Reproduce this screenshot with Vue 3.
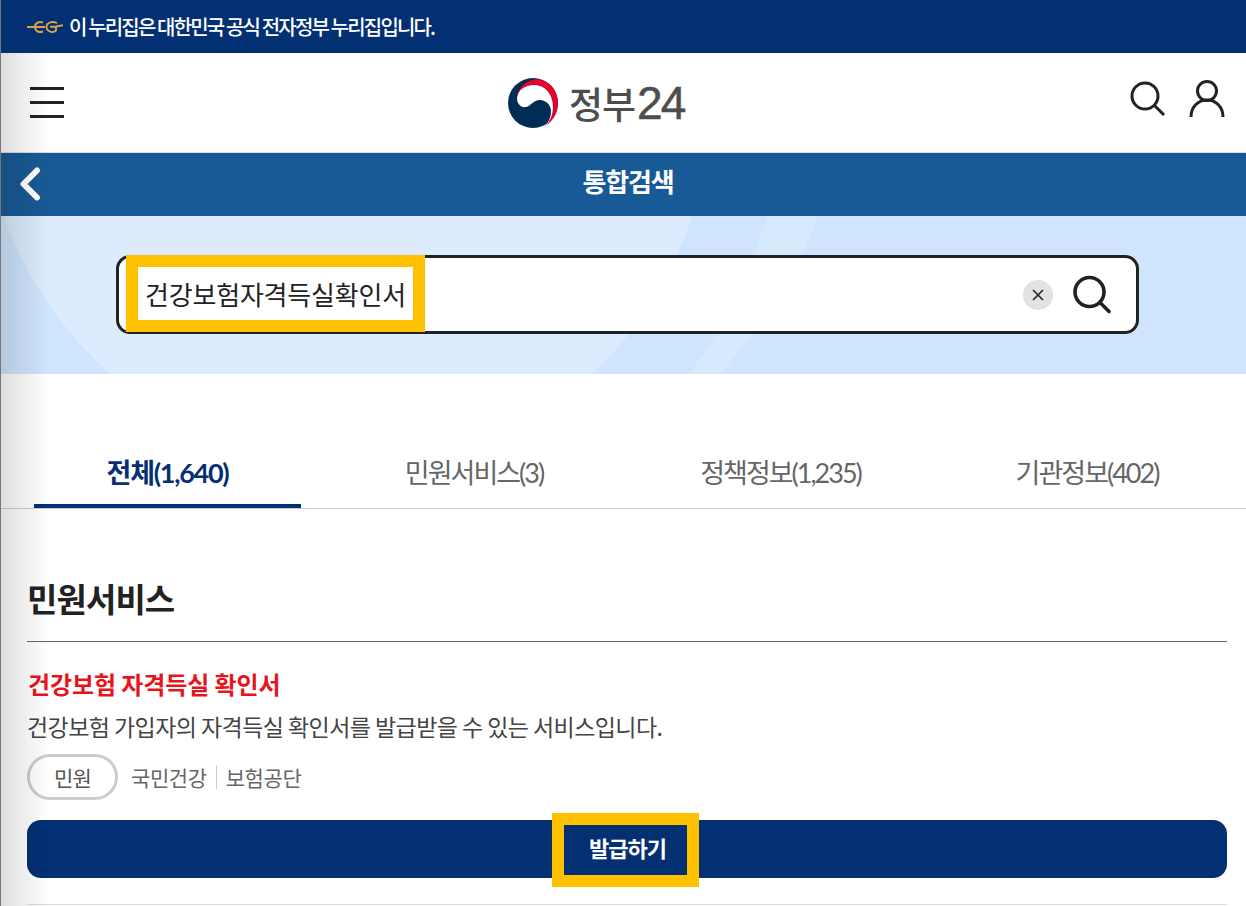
<script setup>
const tabs = [
  { label: '전체(1,640)', active: true },
  { label: '민원서비스(3)', active: false },
  { label: '정책정보(1,235)', active: false },
  { label: '기관정보(402)', active: false }
]
</script>

<template>
  <div class="page">
    <div class="gov-bar">
      <svg class="gov-mark" width="36" height="12" viewBox="0 0 36 12" fill="none" stroke="#d9a24a" stroke-width="1.900">
        <path d="M0 6h18M16 1.500C12 0 8 2 8 6s4 6 8 4.500" />
        <path d="M30 2.200C26-.5 19.500 1.500 19.500 6s6.500 6.500 9.500 3.500V5.800h-6M29 5.500l7-1.300" />
      </svg>
      <span>이 누리집은 대한민국 공식 전자정부 누리집입니다.</span>
    </div>

    <header class="site-header">
      <div class="burger"><i></i><i></i><i></i></div>
      <div class="logo">
        <svg width="52" height="52" viewBox="0 0 52 52">
          <circle cx="26" cy="26" r="25" fill="#002d56" />
          <path d="M10 21C10 12 18 3 30 2c12 1 21 11 21 24 0 11-7 21-15 24 6-3 10-11 10-20C46 17 38 8 27 8 18 8 11 13 10 21z" fill="#e6002d" />
          <path d="M10 21c0 6 4 10 9 9 5-1 7-7 14-7 6 0 11 5 11 11 0 7-3 13-8 16 6-3 10-11 10-20C46 17 38 8 27 8 18 8 11 13 10 21z" fill="#fff" />
        </svg>
        <span class="logo-text">정부<b>24</b></span>
      </div>
      <div class="header-icons">
        <svg width="38" height="38" viewBox="0 0 38 38" fill="none" stroke="#222" stroke-width="3">
          <circle cx="16" cy="16" r="13" />
          <path d="M25.500 25.500l9.500 9.500" />
        </svg>
        <svg width="36" height="38" viewBox="0 0 36 38" fill="none" stroke="#222" stroke-width="3">
          <circle cx="18" cy="11" r="9.500" />
          <path d="M2 37c0-10 7-17 16-17s16 7 16 17" />
        </svg>
      </div>
    </header>

    <div class="title-bar">
      <svg class="back" width="22" height="34" viewBox="0 0 22 34" fill="none" stroke="#fff" stroke-width="6" stroke-linecap="round" stroke-linejoin="round">
        <path d="M18 3.500L4.500 17 18 30.500" />
      </svg>
      <h1>통합검색</h1>
    </div>

    <section class="hero">
      <svg class="hero-art" width="1246" height="158" viewBox="0 0 1246 158" aria-hidden="true">
        <path d="M4 0C25 60 62 115 110 158H593C640 110 670 65 692 0z" fill="#dcebfd" />
        <path d="M767 0C755 40 730 110 688 158H720C770 100 800 50 818 0z" fill="#d7e9fd" />
      </svg>
      <div class="search">
        <div class="query-wrap"><span class="query">건강보험자격득실확인서</span></div>
        <div class="search-actions">
          <span class="clear">
            <svg width="14" height="14" viewBox="0 0 14 14" fill="none" stroke="#222" stroke-width="1.600">
              <path d="M2 2l10 10M12 2L2 12" />
            </svg>
          </span>
          <svg width="40" height="40" viewBox="0 0 40 40" fill="none" stroke="#222" stroke-width="3.600">
            <circle cx="17.500" cy="17" r="14.500" />
            <path d="M28 27.500l9 9" stroke-linecap="round" />
          </svg>
        </div>
      </div>
    </section>

    <nav class="tabs">
      <div v-for="tab in tabs" :key="tab.label" class="tab" :class="{ active: tab.active }">{{ tab.label }}</div>
    </nav>

    <main class="content">
      <h2>민원서비스</h2>
      <article class="result">
        <h3>건강보험 자격득실 확인서</h3>
        <p>건강보험 가입자의 자격득실 확인서를 발급받을 수 있는 서비스입니다.</p>
        <div class="meta">
          <span class="pill">민원</span>
          <span class="org">국민건강</span>
          <span class="org second">보험공단</span>
        </div>
        <div class="issue"><span>발급하기</span></div>
      </article>
    </main>

    <div class="edge-shadow"></div>
  </div>
</template>

<style>
html, body { margin: 0; background: #fff; }
</style>

<style scoped>
.page {
  position: relative;
  width: 1246px;
  height: 906px;
  overflow: hidden;
  background: #fff;
  font-family: "Noto Sans CJK KR", "Noto Sans", sans-serif;
  color: #222;
}
.gov-bar {
  height: 53px;
  box-sizing: border-box;
  padding: 0 0 0 27px;
  display: flex;
  align-items: center;
  gap: 6px;
  background: #032f73;
  color: #fff;
  font-size: 20px;
  font-weight: 500;
  letter-spacing: -1.840px;
}
.site-header {
  height: 100px;
  box-sizing: border-box;
  border-bottom: 1px solid #ddd;
  padding: 0 21px 0 30px;
  display: flex;
  align-items: center;
  justify-content: space-between;
  position: relative;
}
.burger { width: 34px; display: flex; flex-direction: column; gap: 11px; }
.burger i { display: block; height: 3px; background: #222; }
.logo {
  position: absolute;
  left: 507px;
  top: 24px;
  display: flex;
  align-items: center;
  gap: 10px;
}
.logo-text {
  font-size: 37px;
  font-weight: 500;
  color: #4d4d4d;
  letter-spacing: -1px;
  line-height: 52px;
  white-space: nowrap;
}
.logo-text b {
  font-family: "Liberation Sans", sans-serif;
  font-size: 46px;
  font-weight: 400;
  letter-spacing: -2px;
  margin-left: 2px;
  -webkit-text-stroke: 0.5px #4d4d4d;
}
.header-icons { display: flex; gap: 22px; align-items: center; margin-top: -8px; }
.title-bar {
  height: 63px;
  background: #185a96;
  display: flex;
  align-items: center;
  justify-content: center;
  position: relative;
  padding-left: 10px;
}
.title-bar h1 {
  margin: 0 0 8px;
  color: #fff;
  font-size: 26px;
  font-weight: 700;
  letter-spacing: -1.200px;
}
.back { position: absolute; left: 19px; top: 14px; }
.hero {
  height: 158px;
  background: #cfe5fd;
  position: relative;
  display: flex;
  align-items: center;
  justify-content: center;
  padding: 0 0 1px 9px;
  box-sizing: border-box;
}
.hero-art { position: absolute; left: 0; top: 0; }
.search {
  position: relative;
  width: 1023px;
  height: 79px;
  box-sizing: border-box;
  background: #fff;
  border: 3px solid #222;
  border-radius: 14px;
  display: flex;
  align-items: center;
  justify-content: space-between;
}
.query-wrap {
  position: absolute;
  left: 7px;
  top: -3px;
  width: 299px;
  height: 77px;
  box-sizing: border-box;
  border: 12px solid #ffc000;
  background: #fff;
  display: flex;
  align-items: center;
  padding-left: 7px;
}
.query { font-size: 26px; color: #222; letter-spacing: -0.200px; white-space: nowrap; }
.search-actions {
  margin-left: auto;
  display: flex;
  align-items: center;
  gap: 19px;
  padding-right: 24px;
}
.clear {
  width: 30px;
  height: 30px;
  border-radius: 50%;
  background: #e2e2e2;
  display: flex;
  align-items: center;
  justify-content: center;
}
.tabs {
  height: 135px;
  box-sizing: border-box;
  border-bottom: 1px solid #ccc;
  display: grid;
  grid-template-columns: repeat(4, 267px);
  column-gap: 39.500px;
  padding: 0 0 0 34px;
  align-items: end;
}
.tab {
  height: 71px;
  box-sizing: border-box;
  text-align: center;
  font-family: Lato, "Noto Sans CJK KR", sans-serif;
  font-size: 27px;
  line-height: 72px;
  letter-spacing: -2px;
  color: #666;
  white-space: nowrap;
}
.tab.active {
  color: #032f73;
  font-weight: 700;
  letter-spacing: -1.300px;
  border-bottom: 4px solid #032f73;
}
.content { padding: 0 19px 0 27px; }
h2 {
  margin: 0;
  height: 133px;
  box-sizing: border-box;
  padding-top: 65px;
  border-bottom: 1px solid #666;
  font-size: 33px;
  font-weight: 700;
  line-height: 48px;
  letter-spacing: -0.900px;
  color: #222;
}
.result { border-bottom: 1px solid #ddd; height: 263px; box-sizing: border-box; }
h3 {
  margin: 0;
  padding: 25px 0 0 1px;
  font-size: 24px;
  font-weight: 700;
  line-height: 34px;
  letter-spacing: -0.100px;
  color: #e8141c;
}
p {
  margin: 9px 0 0;
  font-size: 23px;
  line-height: 32px;
  letter-spacing: -0.560px;
  color: #444;
}
.meta { display: flex; align-items: center; margin-top: 12px; height: 46px; }
.pill {
  width: 91px;
  height: 46px;
  box-sizing: border-box;
  border: 3px solid #ccc;
  border-radius: 23px;
  display: flex;
  align-items: center;
  justify-content: center;
  font-size: 21px;
  color: #555;
  letter-spacing: -0.800px;
}
.org { font-size: 21px; color: #666; letter-spacing: -0.400px; margin-left: 13px; }
.org.second { margin-left: 9px; padding-left: 9px; border-left: 1px solid #ccc; line-height: 24px; }
.issue {
  position: relative;
  margin-top: 20px;
  height: 58px;
  border-radius: 14px;
  background: #032f73;
  display: flex;
  align-items: center;
  justify-content: center;
}
.issue span {
  position: absolute;
  left: 525px;
  top: -7px;
  width: 147px;
  height: 74px;
  box-sizing: border-box;
  border: 12px solid #ffc000;
  padding: 0 0 6px 4px;
  display: flex;
  align-items: center;
  justify-content: center;
  color: #fff;
  font-size: 22px;
  font-weight: 700;
  letter-spacing: -1px;
}
.edge-shadow {
  position: absolute;
  left: 0;
  top: 53px;
  bottom: 0;
  width: 50px;
  background: linear-gradient(90deg, rgba(0,0,0,.13), rgba(0,0,0,0));
  pointer-events: none;
}
.page::before {
  content: "";
  position: absolute;
  left: 0;
  top: 0;
  bottom: 0;
  width: 1px;
  background: #777;
  z-index: 2;
}
</style>
